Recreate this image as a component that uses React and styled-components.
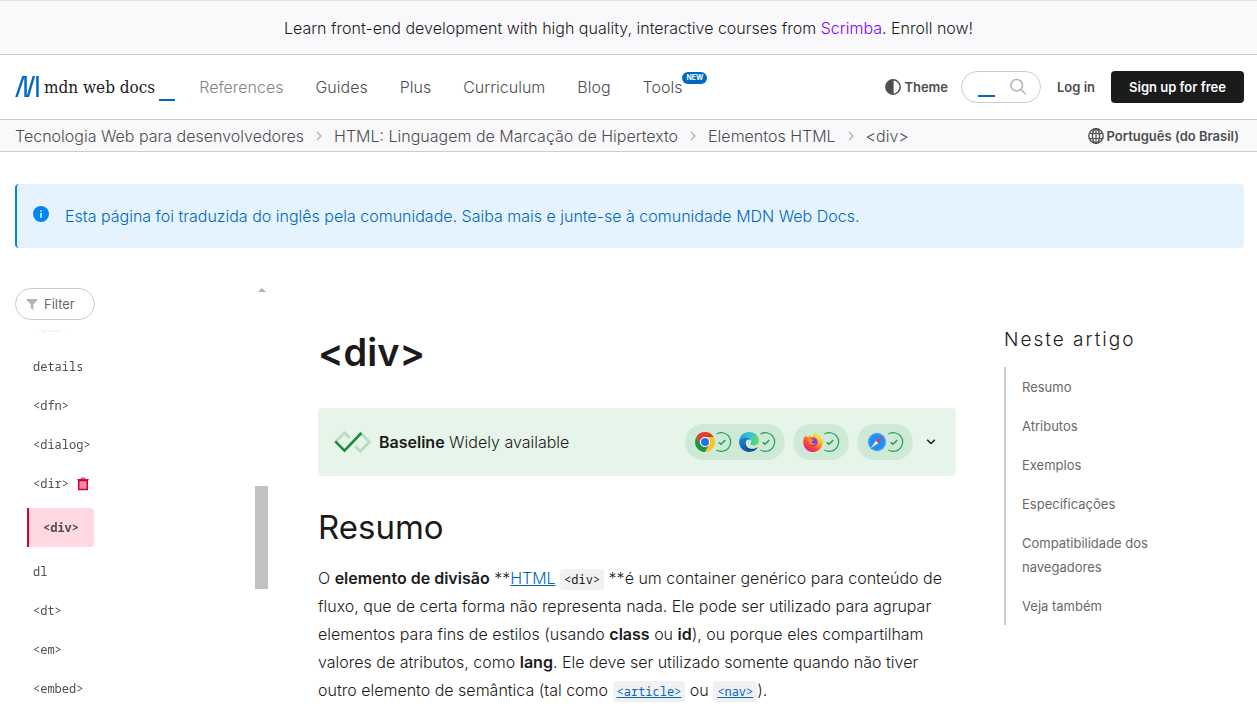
import React from "react";
import styled, { createGlobalStyle } from "styled-components";

const sidebarTop = ["<del>", "details", "<dfn>", "<dialog>"];
const sidebarBottom = ["dl", "<dt>", "<em>", "<embed>"];

const tocItems = [
  "Resumo",
  "Atributos",
  "Exemplos",
  "Especificações",
  "Compatibilidade dos navegadores",
  "Veja também",
];

const navItems = ["Guides", "Plus", "Curriculum", "Blog"];

const crumbs = [
  "Tecnologia Web para desenvolvedores",
  "HTML: Linguagem de Marcação de Hipertexto",
  "Elementos HTML",
  "<div>",
];

function App() {
  return (
    <React.Fragment>
      <GlobalStyle />
      <Banner>
        <p>
          Learn front-end development with high quality, interactive courses
          from <BannerLink href="#scrimba">Scrimba</BannerLink>. Enroll now!
        </p>
      </Banner>
      <Header>
        <Logo href="#home" aria-label="MDN Web Docs">
          <LogoMark />
          <LogoText>mdn web docs</LogoText>
          <Underscore $width={16} />
        </Logo>
        <Nav>
          <NavLink href="#references" $muted>
            References
          </NavLink>
          {navItems.map((item) => (
            <NavLink key={item} href={`#${item.toLowerCase()}`}>
              {item}
            </NavLink>
          ))}
          <NavLink href="#tools">
            Tools<Badge>NEW</Badge>
          </NavLink>
        </Nav>
        <Actions>
          <IconButton type="button">
            <ThemeIcon />
            Theme
          </IconButton>
          <SearchBox>
            <SearchInput type="text" aria-label="Search" />
            <Underscore $width={17} />
            <SearchIcon />
          </SearchBox>
          <LoginLink href="#login">Log in</LoginLink>
          <SignUp href="#signup">Sign up for free</SignUp>
        </Actions>
      </Header>
      <CrumbBar>
        <Crumbs>
          {crumbs.map((crumb, i) => (
            <Crumb key={crumb}>
              {i > 0 && <CrumbChevron />}
              <CrumbLink href="#crumb">{crumb}</CrumbLink>
            </Crumb>
          ))}
        </Crumbs>
        <IconButton type="button">
          <GlobeIcon />
          Português (do Brasil)
        </IconButton>
      </CrumbBar>

      <Notice>
        <InfoIcon />
        <NoticeLink href="#community">
          Esta página foi traduzida do inglês pela comunidade. Saiba mais e
          junte-se à comunidade MDN Web Docs.
        </NoticeLink>
      </Notice>

      <Layout>
        <Sidebar>
          <SidebarBody>
            <Filter>
              <FilterIcon />
              <FilterInput
                type="text"
                placeholder="Filter"
                aria-label="Filter"
              />
            </Filter>
            <SideList>
              {sidebarTop.map((item) => (
                <SideItem key={item}>
                  <SideLink href="#element">{item}</SideLink>
                </SideItem>
              ))}
              <SideItem>
                <SideLink href="#element">{"<dir>"}</SideLink>
                <TrashIcon />
              </SideItem>
              <SideItem $current>
                <CurrentLink href="#element" aria-current="page">
                  {"<div>"}
                </CurrentLink>
              </SideItem>
              {sidebarBottom.map((item) => (
                <SideItem key={item}>
                  <SideLink href="#element">{item}</SideLink>
                </SideItem>
              ))}
            </SideList>
          </SidebarBody>
          <Scrollbar aria-hidden="true">
            <ScrollArrow />
            <ScrollThumb />
          </Scrollbar>
        </Sidebar>

        <Article>
          <h1>{"<div>"}</h1>
          <Baseline>
            <BaselineIcon />
            <BaselineTitle>
              <strong>Baseline</strong> Widely available
            </BaselineTitle>
            <Browsers>
              <Pill>
                <Browser>
                  <ChromeIcon />
                  <CheckIcon />
                </Browser>
                <Browser>
                  <EdgeIcon />
                  <CheckIcon />
                </Browser>
              </Pill>
              <Pill>
                <Browser>
                  <FirefoxIcon />
                  <CheckIcon />
                </Browser>
              </Pill>
              <Pill>
                <Browser>
                  <SafariIcon />
                  <CheckIcon />
                </Browser>
              </Pill>
            </Browsers>
            <Expand type="button" aria-label="Expand">
              <ChevronDown />
            </Expand>
          </Baseline>
          <h2>Resumo</h2>
          <p>
            O <strong>elemento de divisão</strong> **
            <TextLink href="#html">HTML</TextLink> <Code>{"<div>"}</Code> **é um
            container genérico para conteúdo de fluxo, que de certa forma não
            representa nada. Ele pode ser utilizado para agrupar elementos para
            fins de estilos (usando <strong>class</strong> ou{" "}
            <strong>id</strong>), ou porque eles compartilham valores de
            atributos, como <strong>lang</strong>. Ele deve ser utilizado
            somente quando não tiver outro elemento de semântica (tal como{" "}
            <Code>
              <TextLink href="#article">{"<article>"}</TextLink>
            </Code>{" "}
            ou{" "}
            <Code>
              <TextLink href="#nav">{"<nav>"}</TextLink>
            </Code>
            ).
          </p>
        </Article>

        <Toc>
          <TocTitle>Neste artigo</TocTitle>
          <TocList>
            {tocItems.map((item) => (
              <TocItem key={item}>
                <a href="#section">{item}</a>
              </TocItem>
            ))}
          </TocList>
        </Toc>
      </Layout>
    </React.Fragment>
  );
}

/* icons */

const LogoMark = () => (
  <svg width="25" height="24" viewBox="0 0 25 24" fill="#0069c2">
    <path d="M7.300 1h2.500L2.700 22H.2zM9.300 1h2.500v21H9.300zM17.600 1h2.500L14 22h-2.500zM21.200 1h2.500v21h-2.500z" />
  </svg>
);

const ThemeIcon = () => (
  <svg width="16" height="16" viewBox="0 0 16 16">
    <circle cx="8" cy="8" r="7.2" fill="none" stroke="#4e4e4e" strokeWidth="1.5" />
    <path d="M8.600 1v14H8A7 7 0 0 1 8 1z" fill="#4e4e4e" />
  </svg>
);

const SearchIcon = () => (
  <svg width="18" height="18" viewBox="0 0 18 18" fill="none" stroke="#b3b3b3" strokeWidth="1.5">
    <circle cx="7.7" cy="7.2" r="5.8" />
    <path d="M12 11.5l4.700 4.700" />
  </svg>
);

const CrumbChevron = () => (
  <svg width="6" height="10" viewBox="0 0 6 10" fill="none" stroke="#b3b3b3" strokeWidth="1.3">
    <path d="M1 1l4 4-4 4" />
  </svg>
);

const GlobeIcon = () => (
  <svg width="16" height="16" viewBox="0 0 16 16" fill="none" stroke="#4e4e4e" strokeWidth="1.4">
    <circle cx="8" cy="8" r="7.2" />
    <ellipse cx="8" cy="8" rx="3.6" ry="7.2" />
    <path d="M1.200 5.500h13.600M1.200 10.500h13.600M8 .8v14.400" strokeWidth="1.2" />
  </svg>
);

const InfoIcon = () => (
  <svg width="16" height="16" viewBox="0 0 16 16">
    <circle cx="8" cy="8" r="8" fill="#0085f2" />
    <path d="M7.200 7h1.600v5H7.200zM7.200 4.200h1.600v1.600H7.200z" fill="#e5f3ff" />
  </svg>
);

const FilterIcon = () => (
  <svg width="12" height="12" viewBox="0 0 12 12" fill="#b3b3b3">
    <path d="M.6 1h10.800v1L7.400 6.600V12L4.800 10.300V6.600L.6 2z" />
  </svg>
);

const TrashIcon = () => (
  <svg width="12" height="14" viewBox="0 0 12 14">
    <path d="M2 4h8v8.500H2z" fill="#f08ca2" />
    <path d="M1.700 3.400h8.600v9H1.700z" fill="none" stroke="#d30038" strokeWidth="1.5" />
    <path d="M.3 2.600h11.400M4 2.200l.5-1.200h3l.5 1.200" fill="none" stroke="#d30038" strokeWidth="1" />
  </svg>
);

const BaselineIcon = () => (
  <svg width="37" height="22" viewBox="0 0 37 22" fill="none" strokeWidth="2.7">
    <path d="M1.300 11L10.500 1.800l5 5M21.300 15.200l5 5L35.500 11l-9.200-9.200" stroke="#b9dcc2" />
    <path d="M1.300 10.400l9.200 9.200L27.300 2" stroke="#1a8e3c" />
  </svg>
);

const CheckIcon = () => (
  <svg width="18" height="20" viewBox="0 0 18 20" fill="none" stroke="#1fa055">
    <path d="M1.500 1.900A9.400 9.400 0 1 1 1.500 18.100" strokeWidth="1.2" />
    <path d="M3.700 10.200l2.300 2.100 4.300-4.300" strokeWidth="1.5" />
  </svg>
);

const ChromeIcon = () => (
  <svg width="20" height="20" viewBox="0 0 20 20">
    <path d="M1.340 5A10 10 0 0 1 18.660 5H10a5 5 0 0 0-4.330 7.500z" fill="#e33b2e" />
    <path d="M18.660 5A10 10 0 0 1 10 20l4.330-7.500A5 5 0 0 0 10 5z" fill="#fcc31e" />
    <path d="M10 20A10 10 0 0 1 1.340 5l4.330 7.500a5 5 0 0 0 8.660 0z" fill="#229342" />
    <circle cx="10" cy="10" r="5" fill="#fff" />
    <circle cx="10" cy="10" r="4" fill="#1a73e8" />
  </svg>
);

const EdgeIcon = () => (
  <svg width="20" height="20" viewBox="0 0 20 20">
    <defs>
      <linearGradient id="edgeTop" x1="0" y1="0.3" x2="1" y2="0.5">
        <stop offset="0" stopColor="#2aa9e0" />
        <stop offset="0.5" stopColor="#33c4d6" />
        <stop offset="1" stopColor="#66dc62" />
      </linearGradient>
      <linearGradient id="edgeSide" x1="0" y1="0" x2="0.6" y2="1">
        <stop offset="0" stopColor="#1b92dc" />
        <stop offset="1" stopColor="#0f4fa3" />
      </linearGradient>
    </defs>
    <path d="M0 9.600C.3 4 4.600 0 10 0c5.800 0 10 4 10 8.400 0 3-2.300 5-5 5-2.200 0-3.600-.8-3.600-1.500 0-.5.900-.8.900-2.300 0-2.300-2.500-4.300-5.700-4.300C3 5.300.3 7.400 0 9.600z" fill="url(#edgeTop)" />
    <path d="M0 9.600C.3 7 3 5.300 6.300 5.300c2.600 0 4.800 1.100 5.500 2.700-.7-.5-1.400-.6-2-.6-2.300 0-4 2.100-4 4.900 0 4 3.300 7.400 7 7.200-.9.300-1.800.5-2.800.5C4.500 20 0 15.500 0 9.600z" fill="url(#edgeSide)" />
    <path d="M8 8.200c-1 .8-1.300 2-1.300 3.200 0 3 2.700 5.400 6.300 5.400 2.300 0 4-.7 5.200-1.400.3-.2.600.1.400.4-1.500 2.200-3.700 3.700-6.600 3.800-3.300 0-6.200-3.300-6.200-7.100C5.800 10.500 6.700 8.900 8 8.200z" fill="#114a8b" />
  </svg>
);

const FirefoxIcon = () => (
  <svg width="20" height="20" viewBox="0 0 20 20">
    <defs>
      <linearGradient id="foxBody" x1="0.8" y1="0.1" x2="0.2" y2="0.95">
        <stop offset="0" stopColor="#fff44f" />
        <stop offset="0.35" stopColor="#ffa21f" />
        <stop offset="0.65" stopColor="#ff4b3a" />
        <stop offset="1" stopColor="#e8158c" />
      </linearGradient>
      <linearGradient id="foxGlobe" x1="0.7" y1="0" x2="0.3" y2="1">
        <stop offset="0" stopColor="#a03fe0" />
        <stop offset="1" stopColor="#5a3fc8" />
      </linearGradient>
    </defs>
    <path d="M2.600 3.300c.3.700.8 1.200 1.400 1.600.5-.2 1.100-.2 1.600-.1.400-.8 1-1.300 1.800-1.700-.2.800-.1 1.500.3 1.900l2.100-.3C9.700 2.800 11 .9 12.700 0c.1 1.700 1.400 2.700 2.900 3.900.2-.2.200-.5.100-.9C18.500 4.800 19.800 7.500 19.700 10.400 19.500 15.800 15.200 20 10 20S.3 15.700.3 10.400c0-2.700.8-5.300 2.300-7.100z" fill="url(#foxBody)" />
    <circle cx="10.400" cy="9.800" r="4.200" fill="url(#foxGlobe)" />
    <path d="M4.500 7.200c1.500-.9 3.300-.7 4.400.1l2.100.4c0 .8-1.300 1.300-2 1.500-.4 1.500 0 2.300 1.500 2.300 1 0 1.600-.5 2.500-.2-.8 1.400-2.300 2-3.800 1.800C6.500 12.700 5 10 4.500 7.200z" fill="#ff8a1e" />
    <path d="M12 3.500c3 1.500 4.600 4.500 3.600 8 1.600-2 2-5 .2-7.600L12.700 1z" fill="#ffd83a" />
  </svg>
);

const SafariIcon = () => (
  <svg width="20" height="20" viewBox="0 0 20 20">
    <circle cx="10" cy="10" r="9.600" fill="#c9d3dc" />
    <circle cx="10" cy="10" r="8.900" fill="#1e90f5" />
    <circle cx="10" cy="10" r="7.800" fill="none" stroke="#8cc8fb" strokeWidth="0.800" strokeDasharray="0.500 1.100" />
    <path d="M16 4L8.700 8.700l2.600 2.600z" fill="#f0393b" />
    <path d="M4 16l4.700-7.300 2.600 2.600z" fill="#f3f3f5" />
  </svg>
);

const ChevronDown = () => (
  <svg width="10" height="8" viewBox="0 0 10 8" fill="none" stroke="#1b1b1b" strokeWidth="1.500">
    <path d="M1.200 1.700L5 5.500l3.800-3.800" />
  </svg>
);

/* styles */

const sans = `Inter, "Liberation Sans", sans-serif`;
const mono = `"Noto Sans Mono", "Liberation Mono", monospace`;

const GlobalStyle = createGlobalStyle`
  * {
    margin: 0;
    padding: 0;
    box-sizing: border-box;
  }
  body {
    background: #fff;
    color: #1b1b1b;
    font-family: ${sans};
    font-size: 16px;
    font-weight: 300;
  }
  a {
    color: inherit;
    text-decoration: none;
  }
  ul, ol {
    list-style: none;
  }
  button, input {
    font-family: inherit;
    border: 0;
    background: none;
  }
  svg {
    flex: none;
    display: block;
  }
`;

const Banner = styled.div`
  display: flex;
  justify-content: center;
  padding: 15px 16px 14px;
  line-height: 24px;
  background: #f9f9fb;
  border-top: 1px solid #dfe0dc;
  border-bottom: 1px solid #cdcdcd;
`;

const BannerLink = styled.a`
  color: #8000ff;
`;

const Header = styled.header`
  display: flex;
  align-items: center;
  height: 65px;
  padding: 0 13px 0 15px;
  border-bottom: 1px solid #cdcdcd;
`;

const Logo = styled.a`
  display: flex;
  align-items: center;
  margin-right: 24px;
`;

const LogoText = styled.span`
  margin: 0 4px;
  font-family: "DejaVu Serif Condensed", "DejaVu Serif", serif;
  font-size: 17px;
  font-weight: 400;
  line-height: 28px;
`;

const Underscore = styled.span`
  align-self: flex-end;
  width: ${(props) => props.$width}px;
  height: 2px;
  background: #0069c2;
`;

const Nav = styled.nav`
  display: flex;
  gap: 32px;
`;

const NavLink = styled.a`
  display: flex;
  line-height: 24px;
  color: ${(props) => (props.$muted ? "#858585" : "#4e4e4e")};
`;

const Badge = styled.span`
  align-self: flex-start;
  height: 12px;
  margin-top: -3px;
  padding: 0 4px;
  border-radius: 6px;
  background: #0069c2;
  color: #fff;
  font-size: 7px;
  font-weight: 700;
  line-height: 12px;
`;

const Actions = styled.div`
  display: flex;
  align-items: center;
  margin-left: auto;
  font-size: 13px;
  font-weight: 600;
`;

const IconButton = styled.button`
  display: flex;
  align-items: center;
  gap: 3px;
  color: #4e4e4e;
  font-size: 13px;
  font-weight: 600;
`;

const SearchBox = styled.div`
  display: flex;
  align-items: center;
  width: 80px;
  height: 32px;
  margin: 0 16px 0 13px;
  padding: 5px 13px 5px 16px;
  border: 1px solid #cdcdcd;
  border-radius: 16px;

  svg {
    margin-left: auto;
  }
`;

const SearchInput = styled.input`
  width: 0;
`;

const LoginLink = styled.a`
  margin-right: 16px;
  color: #4e4e4e;
`;

const SignUp = styled.a`
  padding: 0 18px;
  border-radius: 4px;
  background: #1b1b1b;
  color: #fff;
  line-height: 32px;
`;

const CrumbBar = styled.div`
  display: flex;
  align-items: center;
  justify-content: space-between;
  height: 32px;
  padding: 0 18px 0 15px;
  background: #f9f9fb;
  border-bottom: 1px solid #cdcdcd;
`;

const Crumbs = styled.ol`
  display: flex;
  gap: 12px;
`;

const Crumb = styled.li`
  display: flex;
  align-items: center;
  gap: 12px;
`;

const CrumbLink = styled.a`
  color: #4e4e4e;
`;

const Notice = styled.div`
  display: flex;
  gap: 16px;
  margin: 32px 13px 40px 15px;
  padding: 20px 16px;
  border-left: 2px solid #0085f2;
  border-radius: 4px;
  background: #e5f3ff;
  line-height: 24px;

  svg {
    margin-top: 2px;
  }
`;

const NoticeLink = styled.a`
  color: #0069c2;
`;

const Layout = styled.div`
  display: grid;
  grid-template-columns: 255px minmax(0, 1fr) 240px;
  column-gap: 48px;
  padding: 0 13px 0 15px;
`;

const Sidebar = styled.aside`
  display: flex;
`;

const SidebarBody = styled.div`
  flex: 1;
`;

const Filter = styled.div`
  display: flex;
  align-items: center;
  gap: 6px;
  width: 80px;
  height: 32px;
  padding: 0 10px;
  border: 1px solid #cdcdcd;
  border-radius: 16px;
`;

const FilterInput = styled.input`
  width: 40px;
  font-size: 13px;
  &::placeholder {
    color: #696969;
  }
`;

const SideList = styled.ul`
  margin-top: 8px;
  padding-left: 12px;
  overflow: hidden;
  mask-image: linear-gradient(transparent, #000 32px);

  li:first-child {
    margin-top: -20px;
  }
`;

const SideItem = styled.li`
  display: flex;
  align-items: center;
  height: 39px;
  margin: ${(props) => (props.$current ? "5px 0" : 0)};
  font-family: ${mono};
  font-size: 12px;
  font-weight: 400;
  color: #4e4e4e;
`;

const SideLink = styled.a`
  padding: 0 8px 0 6px;
`;

const CurrentLink = styled(SideLink)`
  padding: 0 15px 0 14px;
  border-left: 2px solid #d30038;
  border-radius: 0 4px 4px 0;
  background: #ffd9df;
  font-weight: 700;
  line-height: 39px;
`;

const Scrollbar = styled.div`
  display: flex;
  flex-direction: column;
  align-items: center;
  width: 13px;
  margin-right: 2px;
`;

const ScrollArrow = styled.span`
  border: 4px solid transparent;
  border-top: 0;
  border-bottom-color: #b3b3b3;
`;

const ScrollThumb = styled.span`
  width: 13px;
  height: 103px;
  margin-top: 194px;
  background: #c1c1c1;
`;

const Article = styled.main`
  padding-top: 40px;

  h1 {
    margin-bottom: 32px;
    font-size: 38px;
    font-weight: 600;
    line-height: 48px;
  }
  h2 {
    margin: 31px 0 17px;
    font-size: 33px;
    font-weight: 400;
    line-height: 40px;
  }
  p {
    line-height: 28px;
  }
  strong {
    font-weight: 600;
  }
`;

const Baseline = styled.div`
  display: flex;
  align-items: center;
  height: 68px;
  padding: 0 16px;
  border-radius: 4px;
  background: #e6f4ea;
`;

const BaselineTitle = styled.div`
  margin-left: 8px;
`;

const Browsers = styled.div`
  display: flex;
  gap: 8px;
  margin-left: auto;
`;

const Pill = styled.div`
  display: flex;
  gap: 6px;
  padding: 8px 8px 8px 10px;
  border-radius: 18px;
  background: #ceead6;
`;

const Browser = styled.span`
  display: flex;
`;

const Expand = styled.button`
  margin-left: 9px;
  padding: 4px;
`;

const TextLink = styled.a`
  color: #0069c2;
  text-decoration: underline;
`;

const Code = styled.code`
  padding: 2px 4px;
  border-radius: 4px;
  background: #f2f1f1;
  font-family: ${mono};
  font-size: 12px;
  font-weight: 400;
  line-height: 16px;
`;

const Toc = styled.nav`
  padding-top: 37px;
`;

const TocTitle = styled.h2`
  margin-bottom: 12px;
  font-size: 19px;
  font-weight: 300;
  line-height: 30px;
  letter-spacing: 2px;
`;

const TocList = styled.ul`
  border-left: 2px solid #cdcdcd;
`;

const TocItem = styled.li`
  padding: 8px 64px 7px 16px;
  font-size: 13px;
  font-weight: 400;
  line-height: 24px;
  color: #696969;
`;

export default App;
